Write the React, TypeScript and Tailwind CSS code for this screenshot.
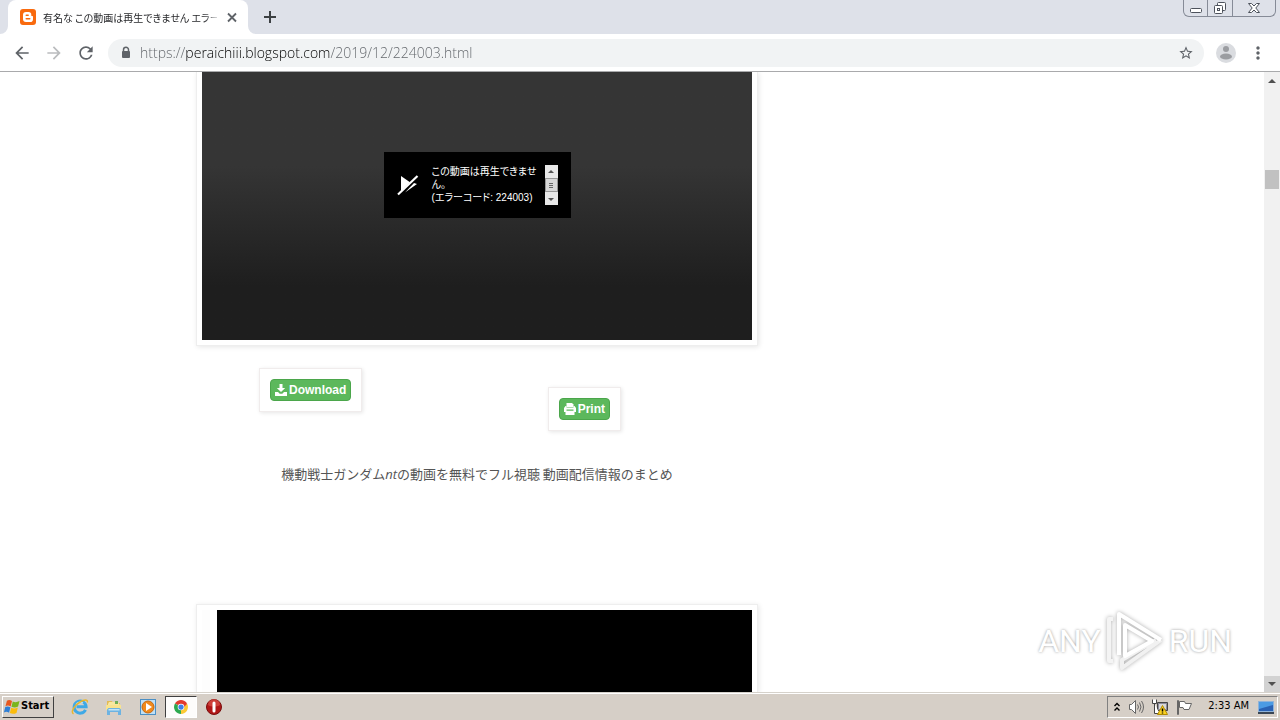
import React, { FC, ReactNode } from "react";
import {
	MdArrowBack,
	MdArrowForward,
	MdMoreVert,
	MdRefresh,
	MdStarBorder,
} from "react-icons/md";

interface IconButtonProps {
	label: string;
	className?: string;
	children: ReactNode;
}

const IconButton: FC<IconButtonProps> = ({ label, className = "", children }) => (
	<button
		aria-label={label}
		className={["flex shrink-0 items-center justify-center", className].join(" ")}
	>
		{children}
	</button>
);

/* ---------- icons ---------- */

const BloggerIcon = () => (
	<svg viewBox="0 0 16 16" className="size-4 shrink-0">
		<rect width="16" height="16" rx="3" fill="#f96a0e" />
		<path
			fillRule="evenodd"
			fill="#fff"
			d="M6 3h2.500A2.800 2.800 0 0 1 11.300 5.800v.7c0 .4.2.6.6.6h.5c.4 0 .6.3.6.7v2.400A2.800 2.800 0 0 1 10.200 13H6a3 3 0 0 1-3-3V6a3 3 0 0 1 3-3zm.2 2.500a.7.7 0 0 0 0 1.400h2a.7.7 0 0 0 0-1.400zm0 3.600a.7.7 0 0 0 0 1.400h3.600a.7.7 0 0 0 0-1.400z"
		/>
	</svg>
);

const LockIcon = () => (
	<svg viewBox="0 0 16 16" className="size-4 shrink-0">
		<path fill="none" stroke="currentColor" strokeWidth="1.500" d="M5.500 7V4.800a2.500 2.500 0 0 1 5 0V7" />
		<rect x="4" y="6" width="8" height="7" rx="1" fill="currentColor" />
	</svg>
);

const WindowsFlag = () => (
	<svg viewBox="0 0 16 16" className="size-[18px] shrink-0">
		<path fill="#e8581f" d="M3.500 2.500C5 1.500 6.500 1.800 8 2.700L6.800 7.500C5.300 6.600 3.800 6.400 2.200 7.300z" />
		<path fill="#7ab51d" d="M8.700 3c1.500.9 3.500 1 6-.3l-1.300 4.900c-2.200 1.100-4 1-5.900.1z" />
		<path fill="#2f7fd6" d="M2 8.100c1.500-.9 3.100-.7 4.600.2l-1.200 4.800C3.900 12.200 2.400 12 .8 12.900z" />
		<path fill="#fbbc0c" d="M7.300 8.600c1.800 1 3.600 1 5.900-.1L12 13.300c-2.200 1.100-4.100 1-5.900.1z" />
	</svg>
);

const ExplorerIcon = () => (
	<svg viewBox="0 0 18 18" className="size-[18px]">
		<path d="M14.500 11.800a6 6 0 1 1 .6-3H5.500" fill="none" stroke="#3fa9e6" strokeWidth="3" />
		<path d="M5 6.500a5 5 0 0 1 7-1.500" fill="none" stroke="#b9e5fa" strokeWidth="1.200" />
		<path
			d="M2.500 16C-.5 14 3 7.500 9 4c4-2.500 8-3 7.300.5"
			fill="none"
			stroke="#e9b62d"
			strokeWidth="1.500"
		/>
	</svg>
);

const FolderIcon = () => (
	<svg viewBox="0 0 18 18" className="size-[18px]">
		<path fill="#e3bb55" d="M2 3h5l1 2h7v9H2z" />
		<path fill="#f8e7a0" d="M4 4h9l2 3v7H3V6z" />
		<path fill="#6fae57" d="M10 3h3v3h-3z" />
		<path fill="#f9e38f" d="M1 7h15v5H1z" />
		<path fill="#6db3e2" d="M2 17v-5.500L3.500 10h11l1.500 1.500V17h-3v-3H5v3z" />
		<path fill="#c5e5f7" d="M3.500 11h11v1.500h-11z" />
	</svg>
);

const PlayerIcon = () => (
	<svg viewBox="0 0 18 18" className="size-[18px]">
		<rect x="1.500" y="1.500" width="15" height="15" fill="#bfe0f6" stroke="#4b8fc4" />
		<circle cx="9" cy="9" r="6" fill="#f18a1c" stroke="#c7670e" />
		<path fill="#fff" d="M7 5 13 9l-6 4z" />
	</svg>
);

const ChromeIcon = () => (
	<svg viewBox="0 0 16 16" className="size-3.5">
		<path fill="#e33b2e" d="M8 8 1.100 4A8 8 0 0 1 14.900 4z" />
		<path fill="#2da94f" d="M8 8v8A8 8 0 0 1 1.100 4z" />
		<path fill="#fcc934" d="M8 8l6.900-4A8 8 0 0 1 8 16z" />
		<path fill="#e33b2e" d="M8 4.200h7L11.500 8z" />
		<circle cx="8" cy="8" r="3.800" fill="#fff" />
		<circle cx="8" cy="8" r="3" fill="#3f7fe8" />
	</svg>
);

const StopIcon = () => (
	<svg viewBox="0 0 18 18" className="size-[18px]">
		<circle cx="9" cy="9" r="7.500" fill="#b01717" stroke="#7a0d0d" />
		<path fill="#e25a50" d="M3 7a6 6 0 0 1 12 0c-3 2-9 2-12 0z" opacity="0.6" />
		<rect x="7.500" y="3.500" width="3" height="11" rx="1.500" fill="#fff" />
	</svg>
);

const DownloadIcon = () => (
	<svg viewBox="0 0 12 12" className="size-3 shrink-0" fill="currentColor">
		<path d="M4.500 0h3v4h2.700L6 8 1.800 4h2.700z" />
		<path d="M0 8h3l1.700 1.700h2.600L9 8h3v4H0z" />
	</svg>
);

const PrintIcon = () => (
	<svg viewBox="0 0 12 12" className="size-3 shrink-0" fill="currentColor">
		<path d="M3 0h5l1.500 1.500V4H2.500V0z" />
		<path
			fillRule="evenodd"
			d="M1.500 3h1v1.500h7V3h1L12 5v4h-1.500v3h-9V9H0V5zM2.500 6.500v1.200h7V6.500z"
		/>
	</svg>
);

const BrokenVideoIcon = () => (
	<svg viewBox="0 0 24 24" className="size-6 shrink-0">
		<path fill="#fff" d="M5 3l9 6.300L5 18z" />
		<path stroke="#fff" strokeWidth="2.200" d="M2 21.500 21.500 3" />
		<path fill="#fff" d="M21 11 9 19.500 18 10z" />
	</svg>
);

/* ---------- browser chrome ---------- */

const WindowControls = () => (
	<div className="mr-1 ml-auto flex h-[17px] rounded-b-md border border-t-0 border-[#868b97] text-[#4d525c]">
		<IconButton label="Minimize" className="w-6 border-r border-[#868b97]">
			<svg viewBox="0 0 14 14" className="size-3.5" fill="#fff" stroke="currentColor">
				<rect x="1.500" y="7.500" width="11" height="4" rx="1" />
			</svg>
		</IconButton>
		<IconButton label="Restore" className="w-[25px] border-r border-[#868b97]">
			<svg viewBox="0 0 14 14" className="size-3.5" fill="#fff" stroke="currentColor">
				<rect x="4.500" y="1.500" width="8" height="8" rx="1" />
				<rect x="1.500" y="4.500" width="8" height="8" rx="1" />
				<rect x="4.500" y="7.500" width="2" height="2" />
			</svg>
		</IconButton>
		<IconButton label="Close window" className="w-[42px]">
			<svg viewBox="0 0 14 14" className="size-3.5" fill="#fff" stroke="currentColor">
				<path d="M1.500 2.500h3L7 5l2.500-2.500h3L8.800 7l3.700 4.500h-3L7 9l-2.500 2.500h-3L5.200 7z" />
			</svg>
		</IconButton>
	</div>
);

const TabStrip = () => (
	<header className="flex h-[34px] shrink-0 bg-[#dee1e9]">
		<svg viewBox="0 0 8 8" className="size-2 shrink-0 self-end">
			<path fill="#fff" d="M8 0v8H0a8 8 0 0 0 8-8z" />
		</svg>
		<div className="flex w-60 items-center gap-[7px] rounded-t-lg bg-white pr-2 pl-3">
			<BloggerIcon />
			<span className="min-w-0 flex-1 bg-linear-to-r from-[#202124] from-92% to-[#c4c6c8] bg-clip-text font-['Noto_Sans_CJK_JP',sans-serif] text-[10px] whitespace-nowrap text-transparent [font-feature-settings:'palt']">
				有名な この動画は再生できません エラー
			</span>
			<IconButton label="Close tab" className="size-4 text-[#5f6368]">
				<svg viewBox="0 0 16 16" className="size-4" stroke="currentColor" strokeWidth="1.800">
					<path d="M4 4.500l8 8M12 4.500l-8 8" />
				</svg>
			</IconButton>
		</div>
		<svg viewBox="0 0 8 8" className="size-2 shrink-0 self-end">
			<path fill="#fff" d="M0 0v8h8a8 8 0 0 1-8-8z" />
		</svg>
		<IconButton label="New tab" className="w-7 text-[#3c4043]">
			<svg viewBox="0 0 16 16" className="size-4" stroke="currentColor" strokeWidth="2">
				<path d="M8 2v12M2 8h12" />
			</svg>
		</IconButton>
		<WindowControls />
	</header>
);

const Toolbar = () => (
	<nav className="flex h-[38px] shrink-0 items-center gap-3 border-b border-[#a9aaac] bg-white px-3 text-[#5f6368]">
		<IconButton label="Back">
			<MdArrowBack className="size-5" />
		</IconButton>
		<IconButton label="Forward" className="text-[#babcbe]">
			<MdArrowForward className="size-5" />
		</IconButton>
		<IconButton label="Reload">
			<MdRefresh className="size-5" />
		</IconButton>
		<div className="flex h-7 min-w-0 flex-1 items-center gap-1.5 rounded-full bg-[#f1f3f4] px-2.5">
			<LockIcon />
			{/* scheme and path are dimmed, host is dark */}
			<input
				aria-label="Address"
				type="text"
				defaultValue="https://peraichiii.blogspot.com/2019/12/224003.html"
				className="min-w-0 flex-1 bg-[linear-gradient(to_right,#5f6368_46px,#000_46px,#000_190px,#5f6368_190px)] bg-clip-text font-['Open_Sans',sans-serif] text-sm font-light text-transparent outline-none"
			/>
			<IconButton label="Bookmark">
				<MdStarBorder className="size-4" />
			</IconButton>
		</div>
		<IconButton label="Profile">
			<svg viewBox="0 0 20 20" className="size-5">
				<circle cx="10" cy="10" r="10" fill="#dadce0" />
				<circle cx="10" cy="6" r="3" fill="#9b9da1" />
				<ellipse cx="10" cy="13.500" rx="6" ry="3" fill="#9b9da1" />
			</svg>
		</IconButton>
		<IconButton label="Menu">
			<MdMoreVert className="size-5" />
		</IconButton>
	</nav>
);

const ScrollArrow = ({ up = false }: { up?: boolean }) => (
	<svg viewBox="0 0 8 4" className="h-1 w-2" fill="#505050">
		<path d={up ? "M4 0l4 4H0z" : "M0 0h8L4 4z"} />
	</svg>
);

const ScrollBar = () => (
	<div className="flex w-4 shrink-0 flex-col bg-[#f1f1f1]">
		<IconButton label="Scroll up" className="h-[17px]">
			<ScrollArrow up />
		</IconButton>
		<div className="flex-1 px-px pt-[81px]">
			<div className="h-[19px] bg-[#c1c1c1]"></div>
		</div>
		<IconButton label="Scroll down" className="h-4 bg-[#d2d2d2]">
			<ScrollArrow />
		</IconButton>
	</div>
);

/* ---------- blog post ---------- */

const VideoError = () => (
	<div className="flex h-[66px] w-[187px] items-center bg-black pr-[13px] pl-3 text-white">
		<BrokenVideoIcon />
		<p className="ml-3 flex-1 pb-0.5 font-['Liberation_Sans','Noto_Sans_CJK_JP',sans-serif] text-[10px] leading-[13px] whitespace-nowrap [font-feature-settings:'palt']">
			この動画は再生できませ
			<br />
			ん。
			<br />
			(エラーコード: 224003)
		</p>
		<div className="flex h-10 w-[13px] flex-col justify-between bg-[#e9e9e9]">
			<IconButton label="Scroll message up" className="h-3">
				<svg viewBox="0 0 6 3" className="h-[3px] w-1.5" fill="#555">
					<path d="M3 0l3 3H0z" />
				</svg>
			</IconButton>
			<div className="flex h-3.5 flex-col items-center justify-center gap-px border border-[#989898] bg-[#d8d8d8]">
				<i className="h-px w-1 bg-[#666]"></i>
				<i className="h-px w-1 bg-[#666]"></i>
				<i className="h-px w-1 bg-[#666]"></i>
			</div>
			<IconButton label="Scroll message down" className="h-3">
				<svg viewBox="0 0 6 3" className="h-[3px] w-1.5" fill="#555">
					<path d="M0 0h6L3 3z" />
				</svg>
			</IconButton>
		</div>
	</div>
);

const PostButton = ({ icon, label }: { icon: ReactNode; label: string }) => (
	<div className="border border-[#f0ecec] bg-white p-2.5 shadow-[1px_1px_4px_rgba(0,0,0,0.1)]">
		<button className="flex h-[22px] items-center gap-0.5 rounded-sm border border-[#4ba64b] bg-[#5cb85c] px-1 font-['Liberation_Sans',sans-serif] text-xs font-bold text-white">
			{icon}
			{label}
		</button>
	</div>
);

const Post = () => (
	<article className="ml-[196px] flex w-[562px] shrink-0 flex-col">
		<div className="shrink-0 border border-t-0 border-[#eee] p-[5px] pt-0 shadow-[1px_1px_5px_rgba(0,0,0,0.1)]">
			<div className="flex h-[268px] justify-center bg-linear-to-b from-[#353535] from-35% to-[#1e1e1e] to-80% pt-20">
				<VideoError />
			</div>
		</div>
		<div className="mt-[22px] flex h-[63px] shrink-0 justify-between pr-[137px] pl-[63px]">
			<div className="self-start">
				<PostButton icon={<DownloadIcon />} label="Download" />
			</div>
			<div className="self-end">
				<PostButton icon={<PrintIcon />} label="Print" />
			</div>
		</div>
		<p className="mt-[33px] shrink-0 text-center font-['Noto_Sans_CJK_JP',sans-serif] text-[13px] leading-5 text-[#555]">
			機動戦士ガンダム<i className="font-['Open_Sans',sans-serif]">nt</i>
			の動画を無料でフル視聴 動画配信情報のまとめ
		</p>
		<div className="mt-[120px] flex-1 border border-b-0 border-[#eee] p-[5px] pb-0 shadow-[1px_1px_5px_rgba(0,0,0,0.1)]">
			<div className="h-full border-l-[15px] border-[#fdfdfd] bg-black"></div>
		</div>
	</article>
);

const Watermark = () => (
	<div className="pointer-events-none flex h-[62px] items-center gap-1 font-['Roboto',sans-serif] text-[32px] text-white [text-shadow:0_0_3px_#999]">
		<span>ANY</span>
		<svg
			viewBox="0 0 60 62"
			className="h-[62px] w-[60px] drop-shadow-[0_0_2px_#aaa]"
			fill="none"
			stroke="#fff"
			strokeWidth="4"
			strokeLinejoin="round"
		>
			<path stroke="#f4f4f4" d="M8 9H4v42h4" />
			<path stroke="#f1f1f1" d="M56 30 17 58v-8l34-20" />
			<path d="M14 45V4l42 26M20 46V15l27 16z" />
		</svg>
		<span>RUN</span>
	</div>
);

/* ---------- taskbar ---------- */

const Taskbar = () => (
	<footer className="flex h-7 shrink-0 items-center border-t border-[#d6d2cb] bg-[#d6cfc7] px-0.5 font-['DejaVu_Sans_Condensed','DejaVu_Sans',sans-serif] text-black inset-shadow-[0_1px_0_#fff]">
		<button className="mr-[9px] flex h-[22px] w-[52px] items-center border border-t-white border-r-[#404040] border-b-[#404040] border-l-white text-[11px] font-bold">
			<WindowsFlag />
			Start
		</button>
		<IconButton label="Internet Explorer" className="h-[22px] w-[34px]">
			<ExplorerIcon />
		</IconButton>
		<IconButton label="Windows Explorer" className="h-[22px] w-[34px]">
			<FolderIcon />
		</IconButton>
		<IconButton label="Media Player" className="h-[22px] w-[34px]">
			<PlayerIcon />
		</IconButton>
		<IconButton
			label="Chrome"
			className="h-[22px] w-8 border border-t-[#404040] border-r-white border-b-white border-l-[#404040] bg-[#fdfcfb]"
		>
			<ChromeIcon />
		</IconButton>
		<IconButton label="Opera" className="h-[22px] w-[34px]">
			<StopIcon />
		</IconButton>
		<div className="ml-auto flex h-[22px] items-center gap-2 border border-t-[#808080] border-r-white border-b-white border-l-[#808080] pr-0.5 pl-1.5 text-[11px]">
			<IconButton label="Show hidden icons">
				<svg viewBox="0 0 6 10" className="h-2.5 w-1.5" fill="none" stroke="#000" strokeWidth="1.400">
					<path d="M.5 4 3 1.500 5.500 4M.5 8.500 3 6l2.500 2.500" />
				</svg>
			</IconButton>
			<IconButton label="Volume">
				<svg viewBox="0 0 16 16" className="size-4" fill="#fff" stroke="#666">
					<path d="M1.500 5.500h2L7.500 1.500v13l-4-4h-2z" />
					<path fill="none" d="M9.500 5.500q2 2.500 0 5M11.500 3.500q3 4.500 0 9M13.500 2q4 6 0 12" />
				</svg>
			</IconButton>
			<IconButton label="Network">
				<svg viewBox="0 0 16 16" className="size-4">
					<path fill="#8b8b9b" stroke="#444" d="M5.500 3.500h10v8h-10z" />
					<path fill="#d8d8d8" d="M7 5h7v5H7z" />
					<path fill="#fff" stroke="#444" d="M.5.500v4h4v-4M2.500 4.500v10h5" />
					<path fill="#fbd221" stroke="#b18a00" d="M10.500 6.500 15.500 15.500h-10z" />
					<path stroke="#000" strokeWidth="1.500" d="M10.500 9.500v3M10.500 13.500v1" />
				</svg>
			</IconButton>
			<IconButton label="Action Center">
				<svg viewBox="0 0 16 16" className="size-4" fill="#fff" stroke="#666">
					<path d="M1.500 1.500h1v14h-1zM3.500 2.500h5l1 2h6l-2.500 6H8l-1-2H3.500z" />
				</svg>
			</IconButton>
			<time className="ml-2 whitespace-nowrap">2:33 AM</time>
			<IconButton label="Show desktop">
				<svg viewBox="0 0 18 16" className="h-4 w-[18px]">
					<path fill="#2a62b4" stroke="#8fb3d9" d="M1.500 2.500h15v10h-15z" />
					<path fill="#4b9be4" d="M2 3h14v3L2 10z" />
					<path fill="#3a4654" d="M1 13h16v2H1z" />
				</svg>
			</IconButton>
		</div>
	</footer>
);

export default function App() {
	return (
		<div className="flex h-screen flex-col overflow-hidden bg-white">
			<TabStrip />
			<Toolbar />
			<main className="relative flex min-h-0 flex-1 overflow-hidden">
				<Post />
				<div className="flex-1"></div>
				<ScrollBar />
				<div className="absolute right-12 bottom-5">
					<Watermark />
				</div>
			</main>
			<Taskbar />
		</div>
	);
}
